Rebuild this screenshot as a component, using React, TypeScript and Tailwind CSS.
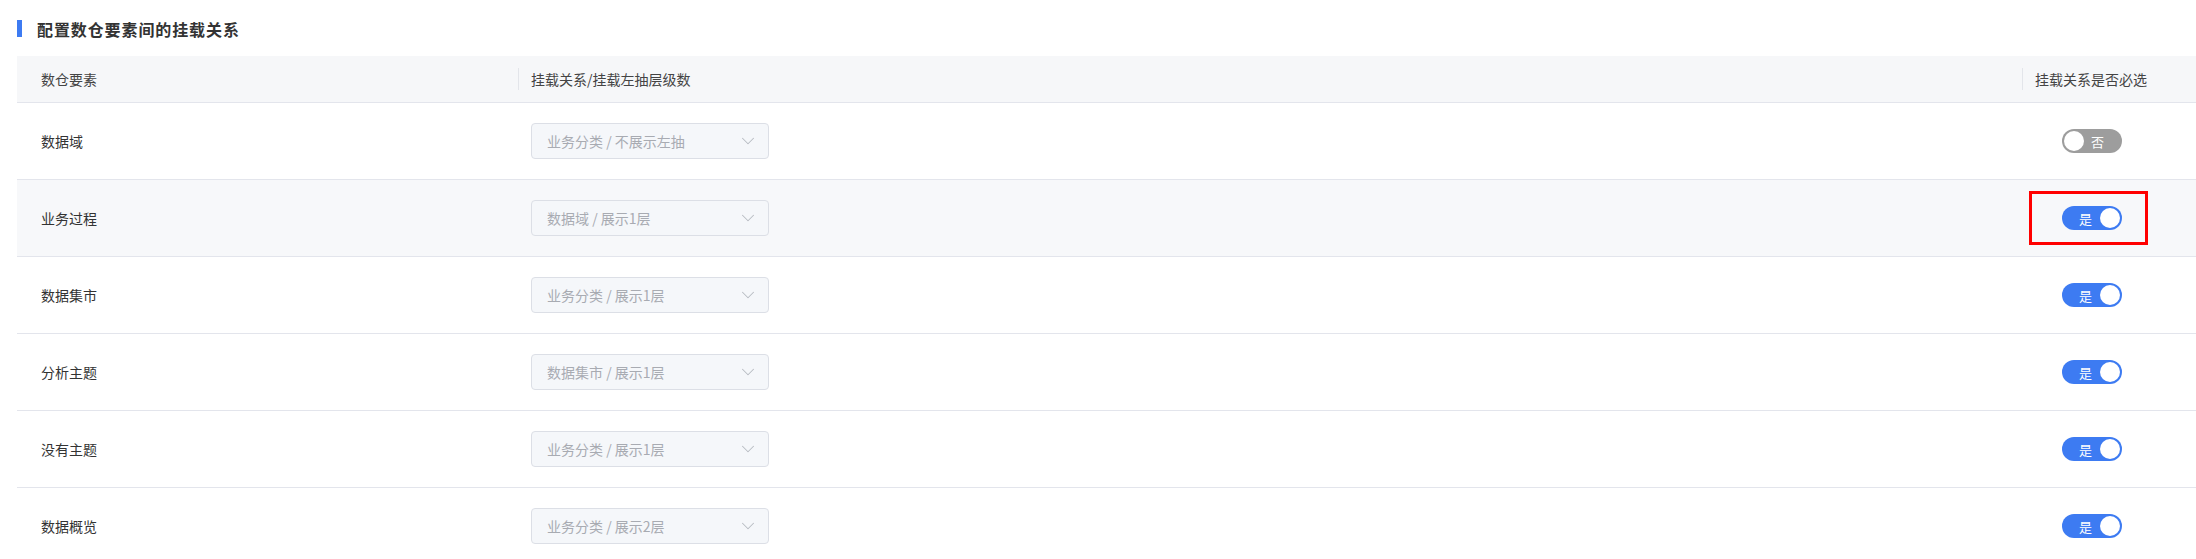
import { ChevronDown } from "lucide-react"

interface MountRow {
  name: string
  relation: string
  required: boolean
  highlight?: boolean
  hovered?: boolean
}

const rows: MountRow[] = [
  { name: "数据域", relation: "业务分类 / 不展示左抽", required: false },
  { name: "业务过程", relation: "数据域 / 展示1层", required: true, highlight: true, hovered: true },
  { name: "数据集市", relation: "业务分类 / 展示1层", required: true },
  { name: "分析主题", relation: "数据集市 / 展示1层", required: true },
  { name: "没有主题", relation: "业务分类 / 展示1层", required: true },
  { name: "数据概览", relation: "业务分类 / 展示2层", required: true },
]

function Toggle({ on }: { on: boolean }) {
  if (on) {
    return (
      <div className="flex h-[24px] w-[60px] items-center justify-between rounded-full bg-[#3d7bf2] pl-[17px] pr-[2px]">
        <span className="text-[13px] leading-none text-white">是</span>
        <span className="h-[20px] w-[20px] rounded-full bg-white" />
      </div>
    )
  }
  return (
    <div className="flex h-[24px] w-[60px] items-center rounded-full bg-[#9d9d9d] pl-[2px]">
      <span className="h-[20px] w-[20px] rounded-full bg-white" />
      <span className="ml-[7px] text-[13px] leading-none text-white">否</span>
    </div>
  )
}

function HeaderCell({ label, divider, className }: { label: string; divider?: boolean; className?: string }) {
  return (
    <div className={`flex h-full items-center ${className ?? ""}`}>
      {divider && <span className="mr-[12px] h-[22px] w-px bg-[#e3e5ea]" />}
      <span>{label}</span>
    </div>
  )
}

export default function App() {
  return (
    <div
      className="h-[559px] w-[2196px] overflow-hidden bg-white pl-[17px] pt-[20px] text-[#333]"
      style={{ fontFamily: '"Noto Sans CJK SC", "Noto Sans", sans-serif' }}
    >
      <div className="flex h-[17px] items-center">
        <span className="h-[17px] w-[5px] bg-[#3d7bf2]" />
        <h2 className="ml-[15px] text-[16px] font-bold leading-none tracking-[0.9px] text-[#333]">
          配置数仓要素间的挂载关系
        </h2>
      </div>

      <div className="mt-[19px] text-[14px]">
        <div className="flex h-[47px] border-b border-[#e3e5ec] bg-[#f6f7f9] text-[#444]">
          <HeaderCell label="数仓要素" className="w-[501px] pl-[24px]" />
          <HeaderCell label="挂载关系/挂载左抽层级数" divider className="w-[1504px]" />
          <HeaderCell label="挂载关系是否必选" divider className="flex-1" />
        </div>

        {rows.map((row) => (
          <div
            key={row.name}
            className={`flex h-[77px] items-center border-b border-[#e3e5ec] ${row.hovered ? "bg-[#f7f8fa]" : "bg-white"}`}
          >
            <div className="w-[501px] pl-[24px] text-[#333]">{row.name}</div>
            <div className="w-[1504px] pl-[13px]">
              <div className="flex h-[36px] w-[238px] items-center justify-between rounded-[4px] border border-[#dcdfe6] bg-[#f5f7fa] pl-[15px] pr-[9px] text-[#a8abb2]">
                <span>{row.relation}</span>
                <ChevronDown className="h-[22px] w-[22px] text-[#b8bbc2]" strokeWidth={1.1} />
              </div>
            </div>
            <div className="flex-1 pl-[40px]">
              {row.highlight ? (
                <div className="-ml-[33px] flex h-[54px] w-[119px] items-center border-[3px] border-[#f00] pl-[30px]">
                  <Toggle on={row.required} />
                </div>
              ) : (
                <Toggle on={row.required} />
              )}
            </div>
          </div>
        ))}
      </div>
    </div>
  )
}
